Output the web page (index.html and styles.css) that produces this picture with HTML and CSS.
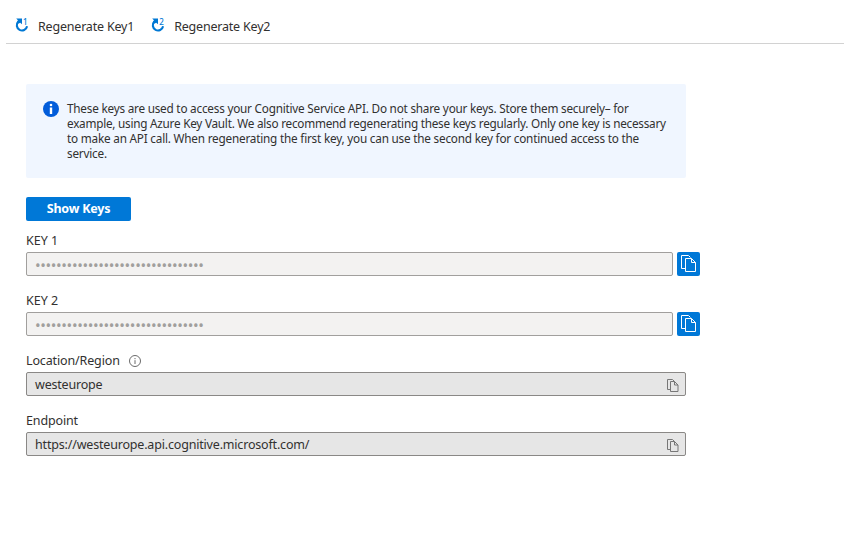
FILE: index.html
```html
<!DOCTYPE html>
<html lang="en">
<head>
<meta charset="utf-8">
<title>Keys and Endpoint</title>
<link rel="stylesheet" href="styles.css">
</head>
<body>
<svg width="0" height="0" class="defs">
  <symbol id="copy" viewBox="0 0 15 17">
    <path d="M4.500 13.500H.5V.5H7.500L9.500 2.500M4.500 3.500H10.500L14.500 7.500V16.500H4.500ZM10.500 3.500V7.500H14.500" fill="none" stroke="currentColor"/>
  </symbol>
  <symbol id="refresh" viewBox="0 0 14 15">
    <path d="M3.300 3.600A5.200 5.200 0 1 0 12.100 8.300" fill="none" stroke="currentColor" stroke-width="2.100"/>
    <path d="M1.200 .6H7V6.300L5.200 4.700 3.200 5.700 2 4.200 2.900 2.300Z" fill="currentColor"/>
  </symbol>
</svg>
<header class="toolbar">
  <button class="command"><span class="regen"><svg width="14" height="15"><use href="#refresh"/></svg><b>1</b></span><span>Regenerate Key1</span></button>
  <button class="command"><span class="regen"><svg width="14" height="15"><use href="#refresh"/></svg><b>2</b></span><span>Regenerate Key2</span></button>
</header>
<main class="content">
  <section class="notice">
    <svg class="notice-icon" width="16" height="16" viewBox="0 0 16 16"><circle cx="8" cy="8" r="8" fill="#015cda"/><circle cx="8" cy="4" r="1.300" fill="#fff"/><path d="M6.800 6.500H9.200V13H6.800Z" fill="#fff"/></svg>
    <p><span class="l1">These keys are used to access your Cognitive Service API. Do not share your keys. Store them securely– for</span><br><span class="l2">example, using Azure Key Vault. We also recommend regenerating these keys regularly. Only one key is necessary</span><br><span class="l3">to make an API call. When regenerating the first key, you can use the second key for continued access to the</span><br>service.</p>
  </section>
  <button class="primary"><span>Show Keys</span></button>
  <div class="field">
    <label>KEY 1</label>
    <div class="row"><div class="box secret"><span class="dots">••••••••••••••••••••••••••••••••</span></div><button class="copy"><svg width="15" height="17"><use href="#copy"/></svg></button></div>
  </div>
  <div class="field">
    <label>KEY 2</label>
    <div class="row"><div class="box secret"><span class="dots">••••••••••••••••••••••••••••••••</span></div><button class="copy"><svg width="15" height="17"><use href="#copy"/></svg></button></div>
  </div>
  <div class="field">
    <label><span class="location">Location/Region</span><svg class="hint" width="12" height="12" viewBox="0 0 12 12"><circle cx="6" cy="6" r="5.500" fill="none" stroke="#6b6b6b"/><path d="M6 3V4.200M6 5.200V9" stroke="#6b6b6b"/></svg></label>
    <div class="box readonly"><span class="region">westeurope</span><svg class="small-copy" width="12" height="13" viewBox="0 0 12 13"><path d="M3 10.500H.5V.5H5.500L7.500 2.500M3.500 2.500H7.500L11 6V12.500H3.500ZM7.500 2.500V6H11" fill="none" stroke="currentColor"/></svg></div>
  </div>
  <div class="field">
    <label class="endpoint">Endpoint</label>
    <div class="box readonly"><span class="url">https://westeurope.api.cognitive.microsoft.com/</span><svg class="small-copy" width="12" height="13" viewBox="0 0 12 13"><path d="M3 10.500H.5V.5H5.500L7.500 2.500M3.500 2.500H7.500L11 6V12.500H3.500ZM7.500 2.500V6H11" fill="none" stroke="currentColor"/></svg></div>
  </div>
</main>
</body>
</html>
```
FILE: styles.css
```css
* { box-sizing: border-box; }
body { margin: 0; background: #fff; color: #323130; font: 12.5px/16px "Noto Sans", "Open Sans", sans-serif; }
button { border: 0; padding: 0; background: none; color: inherit; font: inherit; }
.defs { display: block; height: 0; }
.toolbar { display: flex; gap: 17px; height: 44px; margin-left: 6px; padding: 10px 0 0 9px; border-bottom: 1px solid #d2d2d2; }
.command { display: flex; align-items: center; gap: 9px; height: 33px; white-space: nowrap; letter-spacing: -.2px; }
.regen { position: relative; width: 14px; height: 15px; margin-top: -3px; color: #0078d4; }
.regen svg { display: block; }
.regen b { position: absolute; left: 8px; top: 0; font-size: 8px; line-height: 8px; font-weight: 500; }
.content { width: 674px; margin: 40px 0 0 26px; }
.notice { display: flex; gap: 8px; width: 660px; height: 94px; padding: 17px 17px 0; background: #f0f6ff; border-radius: 2px; }
.notice-icon { flex: none; }
.notice p { margin: 0; font-size: 11.75px; line-height: 15px; white-space: nowrap; letter-spacing: -.21px; }
.l1 { letter-spacing: -.22px; }
.l2 { letter-spacing: -.245px; }
.primary { display: block; width: 105px; height: 24px; margin: 19px 0 11px; border-radius: 2px; background: #0078d7; color: #fff; font-weight: 700; letter-spacing: -.22px; }
.field { height: 60px; }
.field label { display: flex; align-items: center; height: 20px; line-height: 18px; padding-bottom: 2px; }
.location { letter-spacing: -.14px; }
.endpoint { letter-spacing: -.14px; }
.row { display: flex; gap: 4px; }
.box { display: flex; align-items: center; justify-content: space-between; width: 660px; height: 24px; padding: 0 6px 0 8px; border: 1px solid #8a8886; border-radius: 2px; }
.secret { width: 647px; background: #f3f2f1; border-color: #a19f9d; color: #a19f9d; }
.readonly { background: #e6e6e6; }
.readonly span { padding-top: 2px; }
.region { letter-spacing: -.2px; }
.url { letter-spacing: -.18px; }
.dots { padding-top: 2px; font-size: 15px; letter-spacing: -.37px; }
.copy { display: grid; place-items: center; width: 23px; height: 24px; border-radius: 2px; background: #0078d7; color: #fff; }
.copy svg { margin-bottom: 1px; }
.hint { margin-left: 9px; }
.small-copy { color: #777; margin-top: 2px; }
```
